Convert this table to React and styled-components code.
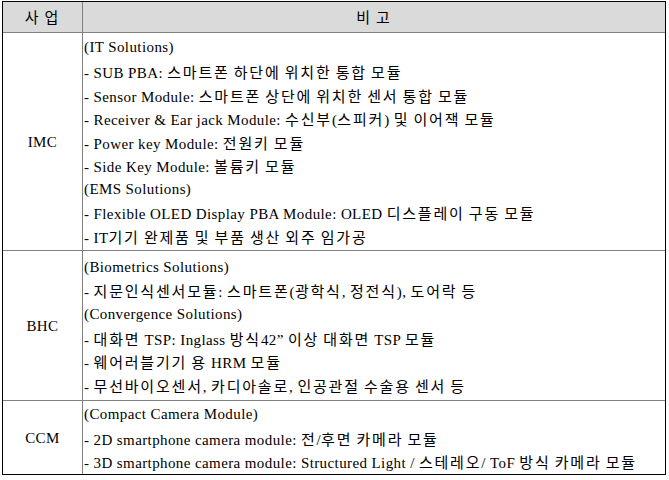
import React from "react";
import styled, { createGlobalStyle } from "styled-components";

const GlobalStyle = createGlobalStyle`
  html, body {
    margin: 0;
    padding: 0;
    background: #ffffff;
  }
  body {
    font-family: "Liberation Serif", "Noto Sans CJK KR", serif;
    color: #000000;
  }
`;

const Table = styled.div`
  display: grid;
  grid-template-columns: 80px 1fr;
  grid-template-rows: 31px 218px 150px 73px;
  width: 662px;
  margin: 1px 0 0 2px;
  border: 1px solid #000000;
  font-family: "Liberation Serif", "Noto Sans CJK KR", serif;
  font-size: 15px;
  line-height: 23.6px;
  letter-spacing: 0.4px;
  color: #000000;
`;

const Cell = styled.div`
  display: flex;
  flex-direction: column;
  justify-content: center;
  align-items: ${(p) => (p.$left ? "flex-start" : "center")};
  padding-left: ${(p) => (p.$left ? "1px" : "0")};
  padding-top: 2px;
  box-sizing: border-box;
  background: ${(p) => (p.$head ? "#dadada" : "#ffffff")};
  border-right: ${(p) => (p.$first ? "1px solid #808080" : "none")};
  border-bottom: ${(p) => (p.$last ? "none" : "1px solid #808080")};
  white-space: nowrap;
  overflow: hidden;
`;

const Line = styled.div`
  height: 23.6px;
`;

const Label = styled.span`
  display: block;
  white-space: pre;
`;

const Hangul = styled.span`
  font-family: "Noto Sans CJK KR", sans-serif;
  letter-spacing: 1.8px;
`;

const HANGUL_RE = /([\u1100-\u11FF\u3130-\u318F\uAC00-\uD7A3]+)/;

function Text({ children }) {
  const parts = children.split(HANGUL_RE);
  return parts.map((p, i) =>
    i % 2 === 1 ? <Hangul key={i}>{p}</Hangul> : <React.Fragment key={i}>{p}</React.Fragment>
  );
}

const rows = [
  {
    name: "IMC",
    lines: [
      "(IT Solutions)",
      "- SUB PBA: 스마트폰 하단에 위치한 통합 모듈",
      "- Sensor Module: 스마트폰 상단에 위치한 센서 통합 모듈",
      "- Receiver & Ear jack Module: 수신부(스피커) 및 이어잭 모듈",
      "- Power key Module: 전원키 모듈",
      "- Side Key Module: 볼륨키 모듈",
      "(EMS Solutions)",
      "- Flexible OLED Display PBA Module: OLED 디스플레이 구동 모듈",
      "- IT기기 완제품 및 부품 생산 외주 임가공",
    ],
  },
  {
    name: "BHC",
    lines: [
      "(Biometrics Solutions)",
      "- 지문인식센서모듈: 스마트폰(광학식, 정전식), 도어락 등",
      "(Convergence Solutions)",
      "- 대화면 TSP: Inglass 방식42” 이상 대화면 TSP 모듈",
      "- 웨어러블기기 용 HRM 모듈",
      "- 무선바이오센서, 카디아솔로, 인공관절 수술용 센서 등",
    ],
  },
  {
    name: "CCM",
    lines: [
      "(Compact Camera Module)",
      "- 2D smartphone camera module: 전/후면 카메라 모듈",
      "- 3D smartphone camera module: Structured Light / 스테레오/ ToF 방식 카메라 모듈",
    ],
  },
];

export default function App() {
  return (
    <>
      <GlobalStyle />
      <Table>
        <Cell $head $first><Label><Text>사 업</Text></Label></Cell>
        <Cell $head><Label><Text>비 고</Text></Label></Cell>
        {rows.map((r, i) => {
          const last = i === rows.length - 1;
          return (
            <React.Fragment key={r.name}>
              <Cell $first $last={last}><Label>{r.name}</Label></Cell>
              <Cell $left $last={last}>
                {r.lines.map((l, j) => (
                  <Line key={j}><Text>{l}</Text></Line>
                ))}
              </Cell>
            </React.Fragment>
          );
        })}
      </Table>
    </>
  );
}
